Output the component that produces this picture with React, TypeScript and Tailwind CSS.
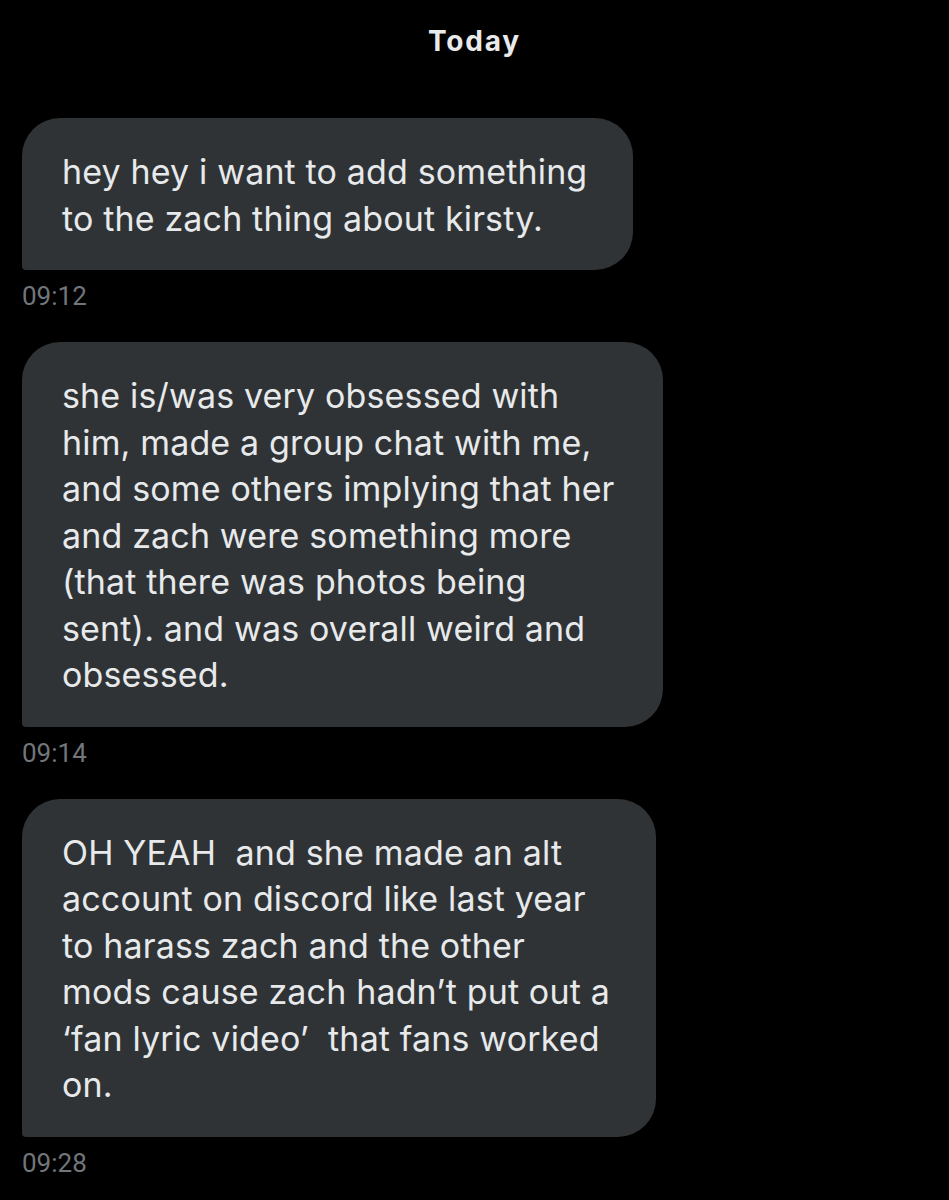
import React from "react";

const messages: { lines: string[]; width: string; time: string }[] = [
  {
    lines: ["hey hey i want to add something", "to the zach thing about kirsty."],
    width: "w-[611px]",
    time: "09:12",
  },
  {
    lines: [
      "she is/was very obsessed with",
      "him, made a group chat with me,",
      "and some others implying that her",
      "and zach were something more",
      "(that there was photos being",
      "sent). and was overall weird and",
      "obsessed.",
    ],
    width: "w-[641px]",
    time: "09:14",
  },
  {
    lines: [
      "OH YEAH\u00a0 and she made an alt",
      "account on discord like last year",
      "to harass zach and the other",
      "mods cause zach hadn\u2019t put out a",
      "\u2018fan lyric video\u2019\u00a0 that fans worked",
      "on.",
    ],
    width: "w-[634px]",
    time: "09:28",
  },
];

export default function App() {
  return (
    <div className="w-[949px] h-[1200px] bg-black overflow-hidden flex flex-col font-['Inter',sans-serif]">
      <div className="pt-[25px] h-[57px] flex justify-center">
        <span className="text-[28px] leading-[32px] font-bold text-[#e7e9ea] tracking-[1.8px]">
          Today
        </span>
      </div>
      <div className="mt-[61px] flex flex-col pl-[22px]">
        {messages.map((m, i) => (
          <div key={i} className="flex flex-col items-start">
            <div
              className={`${m.width} bg-[#2f3336] rounded-[38px] rounded-bl-[4px] pl-[40px] pt-[31px] pb-[28px]`}
            >
              {m.lines.map((l, j) => (
                <div
                  key={j}
                  className="text-[34px] leading-[46.5px] tracking-[0.15px] text-[#e7e9ea] whitespace-nowrap"
                >
                  {l}
                </div>
              ))}
            </div>
            <div className="mt-[11px] mb-[31px] text-[26px] leading-[30px] text-[#71767b] font-['Roboto',sans-serif]">
              {m.time}
            </div>
          </div>
        ))}
      </div>
    </div>
  );
}
